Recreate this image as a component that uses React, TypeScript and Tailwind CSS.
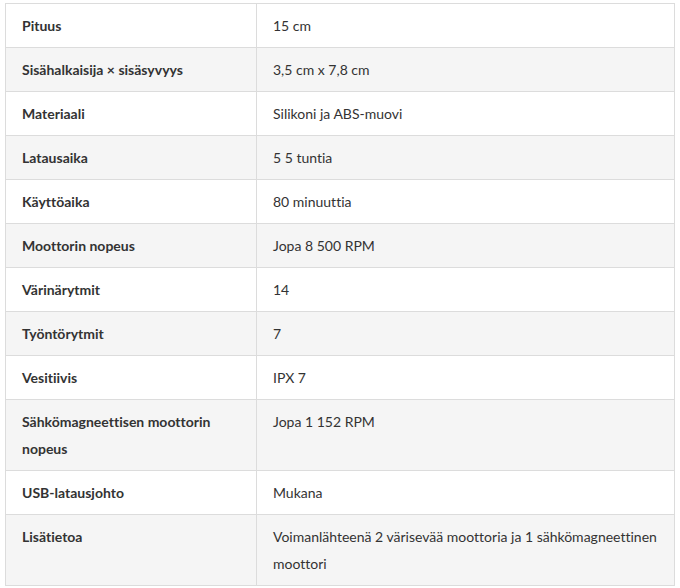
const rows: [string, string][] = [
  ['Pituus', '15 cm'],
  ['Sisähalkaisija × sisäsyvyys', '3,5 cm x 7,8 cm'],
  ['Materiaali', 'Silikoni ja ABS-muovi'],
  ['Latausaika', '5 5 tuntia'],
  ['Käyttöaika', '80 minuuttia'],
  ['Moottorin nopeus', 'Jopa 8 500 RPM'],
  ['Värinärytmit', '14'],
  ['Työntörytmit', '7'],
  ['Vesitiivis', 'IPX 7'],
  ['Sähkömagneettisen moottorin nopeus', 'Jopa 1 152 RPM'],
  ['USB-latausjohto', 'Mukana'],
  ['Lisätietoa', 'Voimanlähteenä 2 värisevää moottoria ja 1 sähkömagneettinen moottori'],
];

const App = () => {
  return (
    <div className="bg-white px-[5px] pt-[3px] font-['Lato','Liberation_Sans',sans-serif] text-[14px] leading-[27px] text-[#333] [font-variant-ligatures:none]">
      <table className="w-[670px] table-fixed border-collapse border border-[#dcdcdc]">
        <colgroup>
          <col className="w-[251px]" />
          <col />
        </colgroup>
        <tbody>
          {rows.map(([label, value], i) => (
            <tr key={label} className={i % 2 === 1 ? 'bg-[#f5f5f5]' : 'bg-white'}>
              <td className="border border-[#dcdcdc] px-4 py-2 align-top font-bold">{label}</td>
              <td className="border border-[#dcdcdc] px-4 py-2 align-top">{value}</td>
            </tr>
          ))}
        </tbody>
      </table>
    </div>
  );
};

export default App;
